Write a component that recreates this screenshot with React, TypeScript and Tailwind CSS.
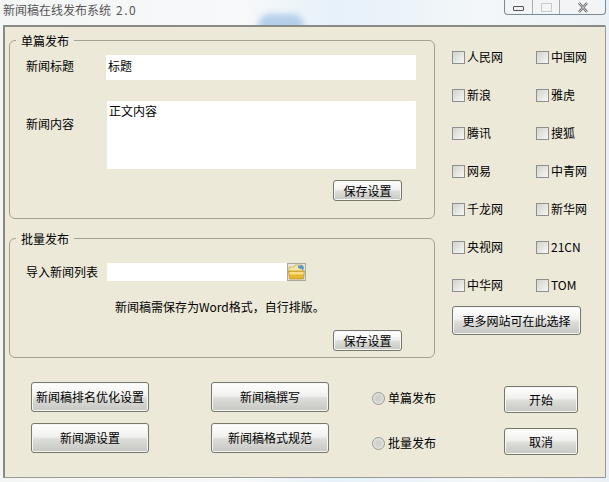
const btn =
  "flex items-center justify-center rounded-[3px] border border-[#77776c] bg-[linear-gradient(#ffffff,#f1f1ef_45%,#dcdcd9_55%,#c6c6c3)] text-[12px] text-black shadow-[inset_0_0_0_1px_#f6f6f4]";

function Checkbox({ label }: { label: string }) {
  return (
    <div className="flex items-center h-[38px]">
      <span className="w-[13px] h-[13px] border border-[#8e8f8f] bg-[linear-gradient(135deg,#d4d4cd,#f6f6f4)] shrink-0" />
      <span className="ml-[2px] text-[12px] text-black">{label}</span>
    </div>
  );
}

function Radio({ label }: { label: string }) {
  return (
    <div className="flex items-center h-[16px]">
      <span className="w-[13px] h-[13px] rounded-full border border-[#9a9a94] bg-[radial-gradient(circle,#d2d2cc_35%,#f4f4f0)] shrink-0" />
      <span className="ml-[3px] text-[12px] text-black">{label}</span>
    </div>
  );
}

function FolderIcon() {
  return (
    <svg width="19" height="18" viewBox="0 0 19 18" className="shrink-0">
      <rect x="0.5" y="0.5" width="18" height="17" fill="#e9e7dc" stroke="#a9a99f" />
      <path d="M2 4h5l1-2h7l1 3v4H2z" fill="#f6e6a0" stroke="#b89a3c" strokeWidth="0.6" />
      <path d="M11 3l4-1 2 2-1 3-2-1-3-1z" fill="#4f9cc4" />
      <path d="M1.5 8h16l-1 8h-14z" fill="#e9b534" stroke="#a98424" strokeWidth="0.6" />
      <path d="M2.5 9h14v2.5h-14z" fill="#f8de7e" />
    </svg>
  );
}

export default function App() {
  return (
    <div
      className="relative w-[609px] h-[482px] overflow-hidden bg-[linear-gradient(90deg,#f4f6f6,#f7f9fa_40%,#e6f1f9_55%,#f3f7f9_80%,#eaf1f6)] text-[12px] leading-none text-black"
      style={{ fontFamily: '"Noto Sans CJK SC", "Liberation Sans", sans-serif' }}
    >
      {/* glass title bar */}
      <div className="absolute left-[258px] top-[14px] w-[46px] h-[24px] rounded-full bg-[#b4cfe9] blur-[3px]" />
      <div className="relative h-[25px] flex items-start">
        <span className="ml-[3px] mt-[4px] text-[12px] leading-[12px] text-[#555555]">
          新闻稿在线发布系统<span className="ml-[5px] tracking-[1.5px]">2.0</span>
        </span>
        <div className="absolute left-[504px] top-0 w-[102px] h-[15px] flex rounded-b-[4px] border border-t-0 border-[#7d8a94] bg-[#f2f4f5]">
          <div className="w-[28px] flex items-center justify-center border-r border-[#a5adb2]">
            <span className="w-[11px] h-[5px] mt-[2px] rounded-[1px] border border-[#4e5358] bg-[#eef0f1]" />
          </div>
          <div className="w-[27px] flex items-center justify-center border-r border-[#a5adb2]">
            <span className="w-[11px] h-[9px] border border-[#c6cacd]" />
          </div>
          <div className="flex-1 flex items-center justify-center">
            <svg width="12" height="11" viewBox="0 0 12 11">
              <path d="M2 1l8 9M10 1l-8 9" stroke="#5c6165" strokeWidth="2.4" />
              <path d="M2 1l8 9M10 1l-8 9" stroke="#e8eaeb" strokeWidth="0.9" />
            </svg>
          </div>
        </div>
      </div>

      {/* client area */}
      <div className="relative ml-[3px] w-[603px] h-[453px] bg-[#ece9d8] border-t-2 border-l-2 border-t-[#8a8a86] border-l-[#8a8a86] border-r border-r-[#9a9a96] border-b border-b-[#9a9a96] rounded-tr-[2px]">
        <div className="flex pl-[4px] pt-[13px]">
          <div className="w-[426px] shrink-0">
            {/* 单篇发布 */}
            <div className="relative h-[179px] border border-[#a3a195] rounded-[6px] pl-[96px]">
              <span className="absolute left-[6px] -top-[7px] bg-[#ece9d8] px-[5px] leading-[14px]">单篇发布</span>
              <div className="flex items-center mt-[14px]">
                <span className="-ml-[80px] w-[80px] -mt-[3px]">新闻标题</span>
                <div className="w-[310px] h-[25px] bg-white pl-[2px] pb-[4px] flex items-center">标题</div>
              </div>
              <div className="flex mt-[21px] ml-[1px]">
                <span className="-ml-[81px] w-[81px] mt-[17px]">新闻内容</span>
                <div className="w-[309px] h-[68px] bg-white pl-[2px] pt-[4px]">正文内容</div>
              </div>
              <div className={`${btn} w-[69px] h-[21px] ml-[227px] mt-[11px]`}>保存设置</div>
            </div>

            {/* 批量发布 */}
            <div className="relative h-[120px] mt-[19px] border border-[#a3a195] rounded-[6px] pl-[97px]">
              <span className="absolute left-[6px] -top-[7px] bg-[#ece9d8] px-[5px] leading-[14px]">批量发布</span>
              <div className="flex items-center mt-[24px]">
                <span className="-ml-[81px] w-[81px]">导入新闻列表</span>
                <div className="w-[199px] h-[18px] bg-white flex justify-end">
                  <FolderIcon />
                </div>
              </div>
              <div className="ml-[8px] mt-[19px] leading-[14px]">
                新闻稿需保存为Word格式，自行排版。
              </div>
              <div className={`${btn} w-[69px] h-[21px] ml-[226px] mt-[16px]`}>保存设置</div>
            </div>
          </div>

          {/* 网站 */}
          <div className="ml-[17px] -mt-[2px]">
            <div className="grid grid-cols-[84px_84px]">
              {["人民网", "中国网", "新浪", "雅虎", "腾讯", "搜狐", "网易", "中青网", "千龙网", "新华网", "央视网", "21CN", "中华网", "TOM"].map((s) => (
                <Checkbox key={s} label={s} />
              ))}
            </div>
            <div className={`${btn} w-[129px] h-[29px] mt-[2px]`}>更多网站可在此选择</div>
          </div>
        </div>

        {/* 底部按钮 */}
        <div className="flex pl-[26px] mt-[24px]">
          <div className="flex flex-col gap-[11px]">
            <div className={`${btn} w-[118px] h-[30px]`}>新闻稿排名优化设置</div>
            <div className={`${btn} w-[118px] h-[30px]`}>新闻源设置</div>
          </div>
          <div className="flex flex-col gap-[11px] ml-[62px]">
            <div className={`${btn} w-[118px] h-[30px]`}>新闻稿撰写</div>
            <div className={`${btn} w-[118px] h-[30px]`}>新闻稿格式规范</div>
          </div>
          <div className="flex flex-col gap-[29px] ml-[43px] mt-[8px]">
            <Radio label="单篇发布" />
            <Radio label="批量发布" />
          </div>
          <div className="flex flex-col gap-[15px] ml-[68px] mt-[4px]">
            <div className={`${btn} w-[74px] h-[27px]`}>开始</div>
            <div className={`${btn} w-[74px] h-[27px]`}>取消</div>
          </div>
        </div>
      </div>
    </div>
  );
}
